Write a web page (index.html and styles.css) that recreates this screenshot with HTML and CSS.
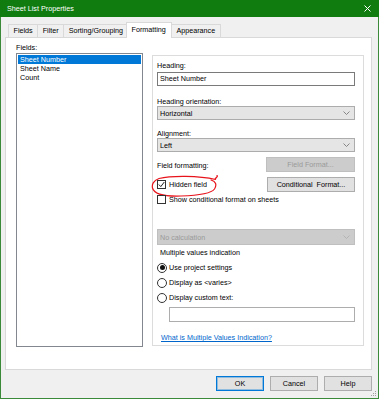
FILE: index.html
```html
<!DOCTYPE html>
<html>
<head>
<meta charset="utf-8">
<link rel="stylesheet" href="styles.css">
</head>
<body>
<div class="window">
  <div class="titlebar">
    <span class="title">Sheet List Properties</span>
    <svg class="close" width="7" height="7" viewBox="0 0 7 7"><path d="M0.5 0.5 L6.5 6.5 M6.5 0.5 L0.5 6.5" stroke="#fff" stroke-width="1"/></svg>
  </div>
  <div class="tabs">
    <div class="tab">Fields</div>
    <div class="tab">Filter</div>
    <div class="tab">Sorting/Grouping</div>
    <div class="tab active">Formatting</div>
    <div class="tab">Appearance</div>
  </div>
  <div class="panel">
    <div class="fields-col">
      <div class="label">Fields:</div>
      <ul class="listbox">
        <li class="sel">Sheet Number</li>
        <li>Sheet Name</li>
        <li>Count</li>
      </ul>
    </div>
    <div class="group">
      <div class="label l-heading">Heading:</div>
      <div class="input">Sheet Number</div>
      <div class="label l-orient">Heading orientation:</div>
      <div class="select"><span>Horizontal</span><svg width="7" height="4" viewBox="0 0 7 4"><polyline points="0.5,0.5 3.5,3.5 6.5,0.5" fill="none" stroke="#7a7a7a" stroke-width="0.9"/></svg></div>
      <div class="label l-align">Alignment:</div>
      <div class="select"><span>Left</span><svg width="7" height="4" viewBox="0 0 7 4"><polyline points="0.5,0.5 3.5,3.5 6.5,0.5" fill="none" stroke="#7a7a7a" stroke-width="0.9"/></svg></div>
      <div class="row row-ff">
        <span class="ff-label">Field formatting:</span>
        <div class="btn disabled wide">Field Format...</div>
      </div>
      <div class="row row-hidden">
        <div class="check">
          <span class="box"><svg width="7" height="7" viewBox="0 0 7 7"><polyline points="0.8,3.5 2.8,5.6 6.3,1" fill="none" stroke="#222" stroke-width="1"/></svg></span>
          <span>Hidden field</span>
          <svg class="annot" width="68" height="23" viewBox="0 0 68 23"><path d="M64 4 C66 2 67 1 66 0.5 M64.5 4.5 C48 0.5 20 0.5 8 3.5 C2 5.5 0.8 10 1.5 13 C3 19 14 21.5 30 21 C46 20.5 60 19 63.5 14 C66 10 65 6.5 60 5" fill="none" stroke="#e8141c" stroke-width="1.2" stroke-linecap="round"/></svg>
        </div>
        <div class="btn wide cf">Conditional&nbsp; Format...</div>
      </div>
      <div class="check row-show">
        <span class="box"></span>
        <span>Show conditional format on sheets</span>
      </div>
      <div class="select disabled-select"><span>No calculation</span><svg width="7" height="4" viewBox="0 0 7 4"><polyline points="0.5,0.5 3.5,3.5 6.5,0.5" fill="none" stroke="#b0b0b0" stroke-width="0.9"/></svg></div>
      <div class="label l-multi">Multiple values indication</div>
      <div class="radios">
        <div class="radio"><span class="circle on"></span><span>Use project settings</span></div>
        <div class="radio"><span class="circle"></span><span>Display as &lt;varies&gt;</span></div>
        <div class="radio"><span class="circle"></span><span>Display custom text:</span></div>
      </div>
      <div class="input custom"></div>
      <a class="link" href="#">What is Multiple Values Indication?</a>
    </div>
  </div>
  <div class="buttons">
    <div class="btn ok">OK</div>
    <div class="btn">Cancel</div>
    <div class="btn">Help</div>
  </div>
  <svg class="grip" width="6" height="6" viewBox="0 0 6 6"><g fill="#a0a0a0"><rect x="4" y="0" width="1" height="1"/><rect x="2" y="2" width="1" height="1"/><rect x="4" y="2" width="1" height="1"/><rect x="0" y="4" width="1" height="1"/><rect x="2" y="4" width="1" height="1"/><rect x="4" y="4" width="1" height="1"/></g></svg>
</div>
</body>
</html>
```
FILE: styles.css
```css
* { box-sizing: border-box; }
body {
  margin: 0;
  font-family: "Liberation Sans", Arial, sans-serif;
  font-size: 7.2px;
  color: #000;
  background: #fff;
}
.window {
  width: 379px;
  height: 399px;
  border: 1px solid #3a8a3a;
  border-top: 0;
  background: #f0f0f0;
  display: flex;
  flex-direction: column;
  position: relative;
}
.titlebar {
  height: 17px;
  margin: 0 -1px;
  background: #107c10;
  color: #fff;
  display: flex;
  align-items: center;
  justify-content: space-between;
  padding: 0 8px 1px 7px;
}
.tabs {
  display: flex;
  align-items: flex-end;
  height: 20px;
  padding: 5px 0 0 7px;
}
.tab {
  height: 13px;
  line-height: 12px;
  padding: 0 4.5px;
  border: 1px solid #d9d9d9;
  border-bottom: 0;
  background: #f0f0f0;
  margin-right: -1px;
}
.tab.active {
  height: 16px;
  line-height: 14px;
  background: #fff;
  margin: 0 -1px -1px -2px;
  padding: 0 5px;
  position: relative;
  z-index: 1;
}
.panel {
  margin: 0 6px 0 4px;
  height: 333px;
  border: 1px solid #d9d9d9;
  background: #fff;
  display: flex;
  gap: 9px;
  padding: 5px 0 0 10px;
}
.fields-col {
  width: 127px;
  display: flex;
  flex-direction: column;
}
.label {
  line-height: 9px;
  height: 9px;
}
.fields-col .label {
  line-height: 10px;
  height: 10px;
}
.listbox {
  list-style: none;
  margin: 0;
  padding: 1px;
  height: 294px;
  border: 1px solid #828790;
  background: #fff;
}
.listbox li {
  height: 9px;
  line-height: 9px;
  padding-left: 2px;
}
.listbox li.sel {
  background: #0078d7;
  color: #fff;
}
.group {
  width: 212px;
  height: 291px;
  margin-top: 12px;
  border: 1px solid #dcdcdc;
  background: #fff;
  padding: 0 8px 0 4px;
  display: flex;
  flex-direction: column;
}
.l-heading { margin-top: 5px; }
.input {
  height: 14px;
  margin-top: 2px;
  border: 1px solid #7a7a7a;
  background: #fff;
  line-height: 12px;
  padding-left: 2px;
}
.l-orient { margin-top: 11px; }
.l-align { margin-top: 9px; }
.select {
  height: 14px;
  border: 1px solid #acacac;
  background: #e5e5e5;
  display: flex;
  align-items: center;
  justify-content: space-between;
  padding: 0 4px 0 2px;
}
.row {
  display: flex;
  align-items: center;
  justify-content: space-between;
  height: 15px;
}
.row-ff { margin-top: 5px; }
.ff-label { padding-top: 2px; }
.row-hidden { margin-top: 5px; }
.btn {
  height: 15px;
  width: 48px;
  border: 1px solid #adadad;
  background: #e1e1e1;
  display: flex;
  align-items: center;
  justify-content: center;
}
.btn.wide { width: 89px; }
.btn.cf { width: 88px; }
.btn.disabled {
  background: #cccccc;
  border-color: #bfbfbf;
  color: #9a9a9a;
}
.check {
  display: flex;
  align-items: center;
  gap: 3px;
  position: relative;
}
.box {
  width: 9px;
  height: 9px;
  border: 1px solid #333;
  background: #fff;
  display: flex;
  align-items: center;
  justify-content: center;
}
.annot {
  position: absolute;
  left: -6px;
  top: -5px;
}
.row-show {
  margin-top: 2px;
  height: 10px;
}
.disabled-select {
  margin-top: 25px;
  height: 16px;
  background: #cccccc;
  border-color: #bfbfbf;
  color: #9a9a9a;
}
.l-multi {
  margin-top: 3px;
  margin-left: 3px;
  height: 10px;
  line-height: 10px;
}
.radios {
  margin-top: 2px;
  display: flex;
  flex-direction: column;
}
.radio {
  height: 15px;
  display: flex;
  align-items: center;
  gap: 2px;
}
.circle {
  width: 10px;
  height: 10px;
  border: 1px solid #333;
  border-radius: 50%;
  background: #fff;
  display: flex;
  align-items: center;
  justify-content: center;
}
.circle.on::after {
  content: "";
  width: 5px;
  height: 5px;
  border-radius: 50%;
  background: #111;
}
.input.custom {
  height: 15px;
  margin: 2px 0 0 12px;
  border-color: #adadad;
}
.link {
  margin: 11px 0 0 4px;
  line-height: 10px;
  color: #0066cc;
  text-decoration: underline;
}
.buttons {
  display: flex;
  justify-content: flex-end;
  gap: 6px;
  padding: 6px 6px 0 0;
}
.btn.ok {
  border-color: #0078d7;
  box-shadow: inset 0 0 0 1px rgba(0, 120, 215, 0.35);
}
.grip {
  position: absolute;
  right: 1px;
  bottom: 1px;
}
```
